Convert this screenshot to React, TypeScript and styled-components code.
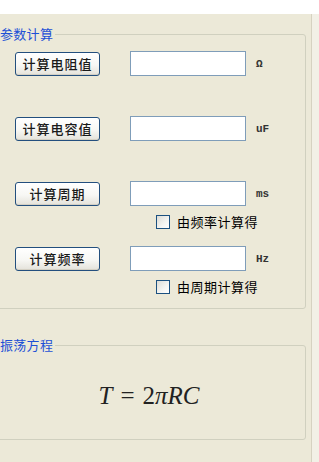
import styled, { createGlobalStyle } from "styled-components";

const GlobalStyle = createGlobalStyle`
	html, body {
		margin: 0;
		padding: 0;
		background: #ffffff;
		height: 100%;
	}
	#root {
		height: 100%;
	}
	* {
		box-sizing: border-box;
	}
`;

const StyledWindow = styled.div`
	display: flex;
	height: calc(100% - 14px);
	margin-top: 14px;
	font-family: "Noto Sans CJK SC", "Liberation Sans", sans-serif;
	font-size: 13px;
	color: #000;
`;

const StyledPanel = styled.div`
	width: 312px;
	flex: none;
	background: #ece9d8;
	border-right: 1px solid #d6d2c1;
	overflow: hidden;
	padding-top: 12px;
`;

const StyledRightStrip = styled.div`
	flex: 1;
	background: #f2f0e6;
`;

const StyledGroup = styled.fieldset<{ $gapTop?: number }>`
	margin: ${(p) => p.$gapTop ?? 0}px 5px 0 -8px;
	padding: 0;
	border: 1px solid #d0d0bf;
	border-radius: 3px;
	min-width: 0;
`;

const StyledLegend = styled.legend`
	margin-left: 7px;
	padding: 0 2px 0 0;
	color: #1d50d6;
	font-size: 13px;
	line-height: 16px;
	letter-spacing: 0.3px;
`;

const StyledGroupBody = styled.div`
	padding: 9px 0 14px 22px;
	display: flex;
	flex-direction: column;
`;

const StyledSlot = styled.div<{ $last?: boolean }>`
	height: ${(p) => (p.$last ? "auto" : "65px")};
	display: grid;
	grid-template-columns: 85px 116px auto;
	grid-auto-rows: min-content;
	column-gap: 30px;
	row-gap: 8px;
	align-items: center;
`;

const StyledButton = styled.button`
	height: 24px;
	width: 85px;
	padding: 0;
	border: 1px solid #234f7e;
	border-radius: 3px;
	background: linear-gradient(#ffffff 0%, #f7f7f4 55%, #e4e2da 100%);
	box-shadow: inset 0 -1px 0 #d4d0c4, inset 0 1px 0 #fff;
	font-family: "Noto Sans CJK SC", sans-serif;
	font-size: 13px;
	font-weight: 500;
	letter-spacing: 1px;
	color: #1a1a1a;
`;

const StyledInput = styled.input`
	height: 25px;
	width: 116px;
	border: 1px solid #7f9db9;
	background: #fff;
	padding: 0 3px;
`;

const StyledUnit = styled.span`
	margin-left: -20px;
	font-family: "Liberation Mono", "DejaVu Sans Mono", monospace;
	font-size: 11px;
	font-weight: bold;
	color: #333;
`;

const StyledCheckLabel = styled.label`
	grid-column: 2 / 4;
	display: flex;
	align-items: center;
	gap: 7px;
	margin-left: 26px;
	font-size: 13px;
	line-height: 15px;
	letter-spacing: 0.5px;
`;

const StyledCheckBox = styled.span`
	width: 14px;
	height: 14px;
	border: 1px solid #1c5180;
	background: linear-gradient(135deg, #dcdcd6 0%, #f5f5f2 60%, #ffffff 100%);
`;

const StyledFormula = styled.div`
	height: 86px;
	display: flex;
	align-items: center;
	justify-content: center;
	font-family: "Liberation Serif", "DejaVu Serif", serif;
	font-size: 25px;
	color: #222;
`;

const StyledOp = styled.span`
	font-style: normal;
	margin: 0 8px;
`;

const StyledVar = styled.i`
	font-style: italic;
`;

interface CalcRow {
	label: string;
	unit: string;
	check?: string;
}

const rows: CalcRow[] = [
	{ label: "计算电阻值", unit: "Ω" },
	{ label: "计算电容值", unit: "uF" },
	{ label: "计算周期", unit: "ms", check: "由频率计算得" },
	{ label: "计算频率", unit: "Hz", check: "由周期计算得" },
];

export default function App() {
	return (
		<>
			<GlobalStyle />
			<StyledWindow>
				<StyledPanel>
					<StyledGroup>
						<StyledLegend>参数计算</StyledLegend>
						<StyledGroupBody>
							{rows.map((row, i) => (
								<StyledSlot key={row.label} $last={i === rows.length - 1}>
									<StyledButton>{row.label}</StyledButton>
									<StyledInput type="text" />
									<StyledUnit>{row.unit}</StyledUnit>
									{row.check && (
										<StyledCheckLabel>
											<StyledCheckBox />
											{row.check}
										</StyledCheckLabel>
									)}
								</StyledSlot>
							))}
						</StyledGroupBody>
					</StyledGroup>
					<StyledGroup $gapTop={28}>
						<StyledLegend>振荡方程</StyledLegend>
						<StyledFormula>
							<StyledVar>T</StyledVar>
							<StyledOp>=</StyledOp>
							<span>2</span>
							<StyledVar>πRC</StyledVar>
						</StyledFormula>
					</StyledGroup>
				</StyledPanel>
				<StyledRightStrip />
			</StyledWindow>
		</>
	);
}
